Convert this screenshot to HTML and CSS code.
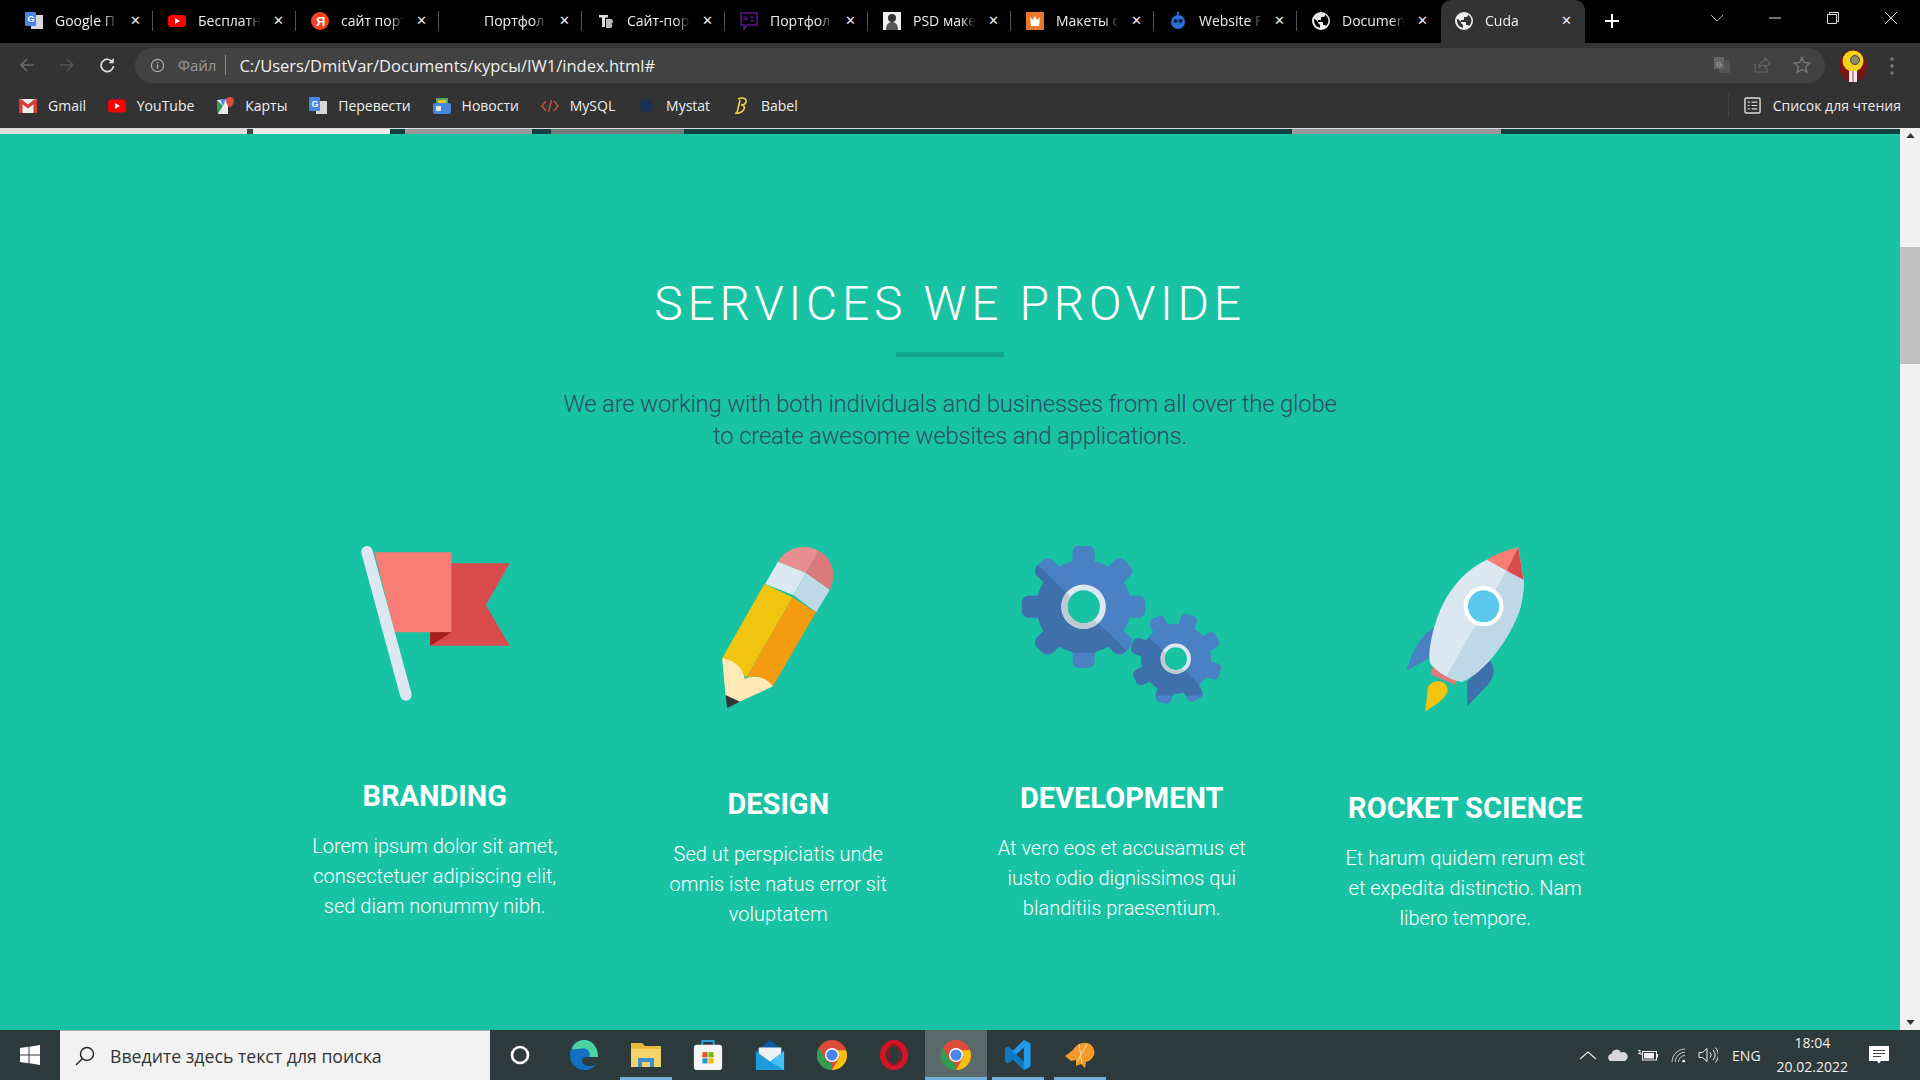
FILE: index.html
```html
<!DOCTYPE html>
<html lang="en">
  <head>
    <meta charset="UTF-8" />
    <meta name="viewport" content="width=device-width, initial-scale=1.0" />
    <title>Cuda</title>
    <link rel="stylesheet" href="styles.css">
  </head>
  <body>
    <div class="tabstrip">
      <div class="tab"><svg class="fav" viewBox="0 0 18 18"><rect x="6" y="3" width="12" height="14" fill="#d8d8d8"/><rect y="0" width="11" height="14" rx="1" fill="#4a86e8"/><text x="2.5" y="10" class="fav-g">G</text></svg><span class="tab-title">Google П</span><span class="tab-close">✕</span></div>
      <div class="tab"><svg class="fav" viewBox="0 0 18 18"><rect y="3" width="18" height="12" rx="3.5" fill="#f00"/><path d="M7 6l5 3-5 3z" fill="#fff"/></svg><span class="tab-title">Бесплатн</span><span class="tab-close">✕</span></div>
      <div class="tab"><svg class="fav" viewBox="0 0 18 18"><circle cx="9" cy="9" r="9" fill="#fc3f1d"/><text x="5" y="14" class="fav-ya">Я</text></svg><span class="tab-title">сайт порт</span><span class="tab-close">✕</span></div>
      <div class="tab"><span class="fav"></span><span class="tab-title">Портфол</span><span class="tab-close">✕</span></div>
      <div class="tab"><svg class="fav" viewBox="0 0 18 18"><path d="M2 3h9v2.500H8V15H5V5.500H2z" fill="#ddd"/><path d="M9 7h4.500a2.500 2.500 0 0 1 1 4.800A2.500 2.500 0 0 1 13.500 16H9z" fill="#bbb"/></svg><span class="tab-title">Сайт-пор</span><span class="tab-close">✕</span></div>
      <div class="tab"><svg class="fav" viewBox="0 0 18 18"><path d="M1 1h16v12H7l-3 4v-4H1z" fill="none" stroke="#5b1a8c" stroke-width="1.500"/><path d="M4 9V5h3v4M4 7h3M10 5h4M12 5v4M10 9h4" fill="none" stroke="#5b1a8c"/></svg><span class="tab-title">Портфол</span><span class="tab-close">✕</span></div>
      <div class="tab"><svg class="fav" viewBox="0 0 18 18"><rect width="18" height="18" fill="#eee"/><circle cx="9" cy="6" r="4" fill="#333"/><path d="M3 18c0-6 3-8 6-8s6 2 6 8z" fill="#555"/></svg><span class="tab-title">PSD маке</span><span class="tab-close">✕</span></div>
      <div class="tab"><svg class="fav" viewBox="0 0 18 18"><rect width="18" height="18" fill="#e8792b"/><path d="M4 5l2.500 3L9 4l2.500 4L14 5l-1 9H5z" fill="#fff"/></svg><span class="tab-title">Макеты с</span><span class="tab-close">✕</span></div>
      <div class="tab"><svg class="fav" viewBox="0 0 18 18"><circle cx="9" cy="10" r="7" fill="#2a6fd6"/><circle cx="6.500" cy="9" r="2" fill="#0b1f44"/><circle cx="11.500" cy="9" r="2" fill="#0b1f44"/><path d="M9 3V0" stroke="#2a6fd6" stroke-width="2"/></svg><span class="tab-title">Website F</span><span class="tab-close">✕</span></div>
      <div class="tab tab-last"><svg class="fav" viewBox="0 0 18 18"><use href="#globe"/></svg><span class="tab-title">Documen</span><span class="tab-close">✕</span></div>
      <div class="tab tab-active"><svg class="fav" viewBox="0 0 18 18"><use href="#globe"/></svg><span class="tab-title">Cuda</span><span class="tab-close">✕</span></div>
      <svg class="new-tab" viewBox="0 0 16 16"><path d="M8 1v14M1 8h14" stroke="#fff" stroke-width="2"/></svg>
      <div class="win-controls">
        <svg viewBox="0 0 14 14"><path d="M1 4l6 6 6-6" fill="none" stroke="#aaa"/></svg>
        <svg viewBox="0 0 14 14"><path d="M1 7h12" stroke="#ddd"/></svg>
        <svg viewBox="0 0 14 14"><path d="M1.500 3.500h9v9h-9zM3.500 3.500v-2h9v9h-2" fill="none" stroke="#ddd"/></svg>
        <svg viewBox="0 0 14 14"><path d="M1 1l12 12M13 1L1 13" stroke="#ddd"/></svg>
      </div>
    </div>

    <div class="toolbar">
      <div class="nav-btns">
        <svg viewBox="0 0 16 16"><path d="M15 8H2M8 2L2 8l6 6" fill="none" stroke="#6b6b6b" stroke-width="1.700"/></svg>
        <svg viewBox="0 0 16 16"><path d="M1 8h13M8 2l6 6-6 6" fill="none" stroke="#555" stroke-width="1.700"/></svg>
        <svg viewBox="0 0 16 16"><path d="M13.500 5A6.200 6.200 0 1 0 14.500 9" fill="none" stroke="#ddd" stroke-width="1.700"/><path d="M14.800 1v5.200H9.600z" fill="#ddd"/></svg>
      </div>
      <div class="omnibox">
        <svg class="info" viewBox="0 0 16 16"><circle cx="8" cy="8" r="6.500" fill="none" stroke="#aaa" stroke-width="1.300"/><path d="M8 7v4.500M8 4.200v1.500" stroke="#aaa" stroke-width="1.500"/></svg>
        <span class="scheme">Файл</span>
        <span class="url">C:/Users/DmitVar/Documents/курсы/IW1/index.html#</span>
        <div class="omni-icons">
          <svg viewBox="0 0 18 18"><rect x="6" y="4" width="11" height="13" fill="#555"/><rect x="1" y="1" width="10" height="12" fill="#666"/><text x="3" y="10.500" class="fav-gt">G</text></svg>
          <svg viewBox="0 0 18 18"><path d="M2 8v8h12v-4M6 12c0-5 3-7 6-7V2l5 5-5 5V9c-3 0-5 1-6 3z" fill="none" stroke="#666" stroke-width="1.200"/></svg>
          <svg viewBox="0 0 18 18"><path d="M9 1.500l2.300 5 5.400.6-4 3.700 1.100 5.400L9 13.500l-4.800 2.700 1.100-5.400-4-3.700 5.400-.6z" fill="none" stroke="#777" stroke-width="1.400"/></svg>
        </div>
      </div>
      <svg class="avatar" viewBox="0 0 28 32"><ellipse cx="14" cy="16" rx="14" ry="16" fill="#7a1414"/><circle cx="14" cy="11" r="10.500" fill="#f2d21b"/><path d="M4 12h20l-5 8H9z" fill="#f2d21b"/><circle cx="16" cy="10" r="4.500" fill="#8a8a6a" stroke="#444"/><path d="M10 21h8v11h-8z" fill="#eee"/><path d="M14 21v11" stroke="#a33"/></svg>
      <svg class="menu-dots" viewBox="0 0 4 18"><circle cx="2" cy="2" r="1.800" fill="#777"/><circle cx="2" cy="9" r="1.800" fill="#777"/><circle cx="2" cy="16" r="1.800" fill="#777"/></svg>
    </div>

    <div class="bookmarks">
      <a class="bm"><svg viewBox="0 0 18 14"><rect width="18" height="14" rx="1.500" fill="#eee"/><path d="M0 1.500v12.500h3.500V5.500L9 9.500l5.500-4V14H18V1.500L16 0 9 5.500 2 0z" fill="#d93c2f"/></svg>Gmail</a>
      <a class="bm"><svg viewBox="0 0 18 14"><rect width="18" height="13" y=".5" rx="3.500" fill="#f00"/><path d="M7 4l5 3-5 3z" fill="#fff"/></svg>YouTube</a>
      <a class="bm"><svg viewBox="0 0 18 18"><path d="M1 3l11-1v15H2z" fill="#eee"/><path d="M1 3l6 6-5 8z" fill="#3a9a54"/><path d="M7 9l5 8H2z" fill="#e8e8e8"/><path d="M4 2h6L7 9z" fill="#4a86e8"/><path d="M14 0a4 4 0 0 1 4 4c0 3-4 7-4 7s-4-4-4-7a4 4 0 0 1 4-4z" fill="#d94b3c"/></svg>Карты</a>
      <a class="bm"><svg viewBox="0 0 18 18"><rect x="7" y="4" width="11" height="13" fill="#d8d8d8"/><rect y="0" width="11" height="14" rx="1" fill="#4a86e8"/><text x="2.500" y="10" class="fav-g">G</text></svg>Перевести</a>
      <a class="bm"><svg viewBox="0 0 18 18"><rect x="3" y="1" width="12" height="6" fill="#5aa75a"/><rect x="5" y="3" width="8" height="4" fill="#e8c33a"/><rect x="0" y="6" width="18" height="11" rx="2" fill="#4a86d8"/><rect x="3" y="9" width="5" height="5" fill="#fff" opacity=".8"/></svg>Новости</a>
      <a class="bm"><svg viewBox="0 0 18 14"><path d="M5 2L1 7l4 5M13 2l4 5-4 5" fill="none" stroke="#c0503c" stroke-width="1.500"/><path d="M10.500 1l-3 12" stroke="#c0503c" stroke-width="1.500"/></svg>MySQL</a>
      <a class="bm"><svg viewBox="0 0 18 18"><circle cx="9" cy="9" r="7" fill="#1a3154"/></svg>Mystat</a>
      <a class="bm"><svg viewBox="0 0 18 18"><path d="M6 2c4-2 9-1 8 3-.5 2-3 3-5 3 3 0 4 2 3 4-1 3-6 5-9 4M8 3L5 16" fill="none" stroke="#f2d23c" stroke-width="1.600"/></svg>Babel</a>
      <a class="reading-list"><svg viewBox="0 0 18 18"><rect x="1" y="1" width="16" height="16" rx="1.500" fill="none" stroke="#ddd" stroke-width="1.500"/><path d="M4 5.500h2M4 9h2M4 12.500h2M8 5.500h6M8 9h6M8 12.500h6" stroke="#ddd" stroke-width="1.300"/></svg>Список для чтения</a>
    </div>

    <div class="viewport">
      <main class="page">
        <div class="hero-edge"></div>
        <section class="services">
          <h1>SERVICES WE PROVIDE</h1>
          <div class="divider"></div>
          <p class="lead">We are working with both individuals and businesses from all over the globe<br>to create awesome websites and applications.</p>
          <div class="service-grid">
            <article class="service">
              <svg class="icon icon-flag" viewBox="41 51 532 570" preserveAspectRatio="none">
                <path d="M128 70H356V310H188z" fill="#f87d74"/>
                <path d="M356 103H528L457 228 528 350H293V310H356z" fill="#d94b4b"/>
                <path d="M293 310H356L293 350z" fill="#a81e1e"/>
                <path d="M106 68L221 498" stroke="#dbe8f1" stroke-width="34" stroke-linecap="round"/>
              </svg>
              <h3>BRANDING</h3>
              <p>Lorem ipsum dolor sit amet,<br>consectetuer adipiscing elit,<br>sed diam nonummy nibh.</p>
            </article>
            <article class="service">
              <svg class="icon icon-pencil" viewBox="1059 51 532 594" preserveAspectRatio="none">
                <path d="M1325 98C1345 60 1400 40 1445 65L1408 132z" fill="#e98f8f"/>
                <path d="M1445 65C1485 85 1500 135 1478 183L1408 132z" fill="#d97a7a"/>
                <path d="M1325 98L1408 132 1370 198 1287 165z" fill="#dbe8f1"/>
                <path d="M1408 132L1478 183 1438 250 1370 198z" fill="#bfd8e6"/>
                <path d="M1285 165L1368 205 1232 445 1160 388z" fill="#f1c40f"/>
                <path d="M1368 205L1437 250 1310 472 1262 442 1232 445z" fill="#f39c12"/>
                <path d="M1160 388C1195 392 1220 415 1227 450 1255 435 1290 445 1310 472L1212 518 1170 500z" fill="#ffeab5"/>
                <path d="M1170 498L1212 518 1175 537z" fill="#333"/>
              </svg>
              <h3>DESIGN</h3>
              <p>Sed ut perspiciatis unde<br>omnis iste natus error sit<br>voluptatem</p>
            </article>
            <article class="service">
              <svg class="icon icon-gears" viewBox="4.500 51 672 576" preserveAspectRatio="none">
                <defs>
                  <g id="cog">
                    <circle r="140"/>
                    <rect x="-33" y="-184" width="66" height="368" rx="20"/>
                    <rect x="-33" y="-184" width="66" height="368" rx="20" transform="rotate(45)"/>
                    <rect x="-33" y="-184" width="66" height="368" rx="20" transform="rotate(90)"/>
                    <rect x="-33" y="-184" width="66" height="368" rx="20" transform="rotate(135)"/>
                  </g>
                  <clipPath id="big-shade"><path d="M0 0L360 372H0z"/></clipPath>
                  <clipPath id="small-shade"><path d="M300 210L590 500H300z"/></clipPath>
                  <path id="globe" d="M9 0a9 9 0 1 0 0 18A9 9 0 0 0 9 0zM2 9c0-1 .2-1.800.5-2.600L6 10v1l2 2v2.800A7 7 0 0 1 2 9zm12 5c-.3-.6-1-1-1.700-1H11v-2c0-.6-.4-1-1-1H6V8h2c.6 0 1-.4 1-1V5h2c1 0 2-.9 2-2v-.3A7 7 0 0 1 14 14z" fill="#eee"/>
                </defs>
                <use href="#cog" transform="translate(233 233) scale(.94 1)" fill="#4a80c4"/>
                <g clip-path="url(#big-shade)"><use href="#cog" transform="translate(233 233) scale(.94 1)" fill="#3e70ac"/></g>
                <ellipse cx="233" cy="233" rx="54" ry="58" fill="#18c3a4" stroke="#dbe8f1" stroke-width="17"/>
                <g clip-path="url(#big-shade)"><ellipse cx="233" cy="233" rx="54" ry="58" fill="none" stroke="#bfcbd1" stroke-width="17"/></g>
                <use href="#cog" transform="translate(492 389) scale(.7 .75) rotate(18)" fill="#4a80c4"/>
                <g clip-path="url(#small-shade)"><use href="#cog" transform="translate(492 389) scale(.7 .75) rotate(18)" fill="#3e70ac"/></g>
                <ellipse cx="491" cy="389" rx="37" ry="40" fill="#18c3a4" stroke="#dbe8f1" stroke-width="11"/>
                <g clip-path="url(#small-shade)"><ellipse cx="491" cy="389" rx="37" ry="40" fill="none" stroke="#bfcbd1" stroke-width="11"/></g>
              </svg>
              <h3>DEVELOPMENT</h3>
              <p>At vero eos et accusamus et<br>iusto odio dignissimos qui<br>blanditiis praesentium.</p>
            </article>
            <article class="service">
              <svg class="icon icon-rocket" viewBox="968 51 672 606" preserveAspectRatio="none">
                <path d="M1216 296C1185 310 1155 370 1140 425L1208 385z" fill="#4a80c4"/>
                <path d="M1365 390C1390 405 1390 435 1370 465L1310 532V460z" fill="#3e70ac"/>
                <path d="M1212 415L1283 450 1275 467 1208 436z" fill="#e07a7a"/>
                <path d="M1193 548L1200 475C1210 450 1250 450 1255 478 1258 505 1225 525 1193 548z" fill="#f1c40f"/>
                <path d="M1365 92C1300 125 1250 190 1225 270 1210 320 1200 370 1206 402 1225 430 1260 452 1295 458 1345 440 1420 350 1455 250 1465 215 1470 180 1468 150L1453 55z" fill="#dbe8f1"/>
                <path d="M1420 125L1468 150C1470 180 1465 215 1455 250 1420 350 1345 440 1295 458 1280 456 1265 450 1252 442z" fill="#bfd8e6"/>
                <path d="M1365 92C1390 75 1425 62 1453 55L1420 125z" fill="#f87d74"/>
                <path d="M1453 55L1468 152 1420 125z" fill="#d94b4b"/>
                <ellipse cx="1356" cy="232" rx="50" ry="54" fill="#5cc8ec" stroke="#fff" stroke-width="12"/>
              </svg>
              <h3>ROCKET SCIENCE</h3>
              <p>Et harum quidem rerum est<br>et expedita distinctio. Nam<br>libero tempore.</p>
            </article>
          </div>
        </section>
      </main>
      <div class="scrollbar">
        <svg viewBox="0 0 10 6"><path d="M5 0l5 6H0z" fill="#333"/></svg>
        <div class="scroll-track"><div class="scroll-thumb"></div></div>
        <svg viewBox="0 0 10 6"><path d="M5 6l5-6H0z" fill="#333"/></svg>
      </div>
    </div>

    <footer class="taskbar">
      <div class="start"><svg viewBox="0 0 20 20"><path d="M0 3l8.500-1.200v7.700H0zM9.500 1.700L20 0v9.500H9.500zM0 10.500h8.500v7.700L0 17zM9.500 10.500H20V20L9.500 18.300z" fill="#fff"/></svg></div>
      <div class="search">
        <svg viewBox="0 0 20 20"><circle cx="12" cy="8" r="6.500" fill="none" stroke="#222" stroke-width="1.400"/><path d="M7.500 12.500L1 19" stroke="#222" stroke-width="1.500"/></svg>
        <span>Введите здесь текст для поиска</span>
      </div>
      <div class="task task-cortana"><svg viewBox="0 0 20 20"><circle cx="10" cy="10" r="8" fill="none" stroke="#fff" stroke-width="2.600"/></svg></div>
      <div class="task"><svg viewBox="0 0 30 32"><path d="M15 0C6 0 0 7 0 16c0 9 7 16 15 16 7 0 11-3 13-6-4 2-12 3-15-2-1-3 1-6 4-6h13C30 8 24 0 15 0z" fill="#1172c4"/><path d="M2 9C5 3 10 0 15 0c9 0 15 8 15 18h-9c1-5-2-10-8-9-5 0-9 2-11 0z" fill="#4cd2a0"/></svg></div>
      <div class="task task-open"><svg viewBox="0 0 30 30"><path d="M0 3h11l3 3h16v21H0z" fill="#e8b93a"/><path d="M0 9h30v18H0z" fill="#f5d36b"/><path d="M7 18h16v9h-4v-5h-8v5H7z" fill="#3b8fd1"/></svg></div>
      <div class="task"><svg viewBox="0 0 30 32"><path d="M9 6V1h12v5" fill="none" stroke="#29a0d8" stroke-width="2"/><rect y="5" width="30" height="27" rx="3" fill="#f5f5f5"/><rect x="9" y="13" width="5.500" height="5.500" fill="#e8512f"/><rect x="15.500" y="13" width="5.500" height="5.500" fill="#7ab800"/><rect x="9" y="19.500" width="5.500" height="5.500" fill="#1f9cd8"/><rect x="15.500" y="19.500" width="5.500" height="5.500" fill="#fbb900"/></svg></div>
      <div class="task"><svg viewBox="0 0 30 32"><path d="M15 0l15 12v20H0V12z" fill="#0a5ea8"/><path d="M3 8h24v12l-12 6-12-6z" fill="#f0f0f0"/><path d="M0 12l15 11 15-11v20H0z" fill="#1c9be0"/><path d="M15 23l15-11v20z" fill="#45c0f2"/></svg></div>
      <div class="task"><svg viewBox="0 0 32 32"><use href="#chrome"/></svg></div>
      <div class="task"><svg viewBox="0 0 30 32"><ellipse cx="15" cy="16" rx="12" ry="13" fill="none" stroke="#d41525" stroke-width="6"/><ellipse cx="15" cy="16" rx="6" ry="11" fill="none" stroke="#a50f1e" stroke-width="1.500"/></svg></div>
      <div class="task task-active"><svg viewBox="0 0 32 32"><defs><g id="chrome"><circle cx="16" cy="16" r="16" fill="#dd4b39"/><path d="M16 32a16 16 0 0 1-14-24l9 16h5z" fill="#2f9e4f"/><path d="M16 32l8-14-3-7h10c4 10-4 21-15 21z" fill="#f4c20d"/><circle cx="16" cy="16" r="7.500" fill="#fff"/><circle cx="16" cy="16" r="6" fill="#4a86e8"/></g></defs><use href="#chrome"/></svg></div>
      <div class="task task-open"><svg viewBox="0 0 30 36"><path d="M22 0l8 4v28l-8 4-13-13-6 5-3-2v-16l3-2 6 5z" fill="#1f9cf0"/><path d="M22 9L12 18l10 9z" fill="#2e3b3d"/><path d="M0 10l3-2 19 18v10L9 23l-6 5-3-2z" fill="#0f78c4"/></svg></div>
      <div class="task task-open"><svg viewBox="0 0 30 30"><path d="M0 16l8-6C12 3 22 0 27 6c5 6 2 14-6 16l-1 6-4-4-5 2 0-6-5 1z" fill="#f39a2b"/><path d="M14 4l3 20M22 4L12 22" stroke="#ffd9a8" fill="none"/></svg></div>
      <div class="tray">
        <svg class="tray-chevron" viewBox="0 0 16 9"><path d="M0 8l8-7 8 7" fill="none" stroke="#eee" stroke-width="1.200"/></svg>
        <svg class="tray-cloud" viewBox="0 0 20 12"><path d="M4 12a3.500 3.500 0 0 1-.5-7A5 5 0 0 1 13 3.500 4 4 0 0 1 17 12z" fill="#d8d8d8"/></svg>
        <svg class="tray-battery" viewBox="0 0 20 12"><path d="M0 1.500h2M0 4.500h2M2 1v4h2" stroke="#eee" fill="none"/><rect x="4.500" y="2.500" width="14" height="8.500" fill="none" stroke="#eee"/><rect x="6" y="4" width="10" height="5.500" fill="#eee"/><rect x="19" y="5" width="1" height="3.500" fill="#eee"/></svg>
        <svg class="tray-wifi" viewBox="0 0 16 16"><path d="M1 15A14 14 0 0 1 15 1M4.500 15A10.500 10.500 0 0 1 15 4.500M8 15a7 7 0 0 1 7-7" fill="none" stroke="#ccc"/><circle cx="13.500" cy="14" r="1.500" fill="#eee"/></svg>
        <svg class="tray-volume" viewBox="0 0 20 16"><path d="M1 5.500h3.500L9 1.500v13l-4.500-4H1zM12 5.500a3.500 3.500 0 0 1 0 5M15 3a7 7 0 0 1 0 10M17.500 .5a11 11 0 0 1 0 15" fill="none" stroke="#eee"/></svg>
        <span class="lang">ENG</span>
        <div class="clock"><span>18:04</span><span>20.02.2022</span></div>
        <svg class="tray-notify" viewBox="0 0 20 20"><path d="M0 1h20v15h-8l-2 2.500L8 16H0z" fill="#fff"/><path d="M4 5.500h12M4 8.500h12M4 11.500h8" stroke="#444"/></svg>
      </div>
    </footer>
  </body>
</html>
```

FILE: styles.css
```css
* {
  box-sizing: border-box;
}
html, body {
  height: 100%;
}
body {
  margin: 0;
  display: flex;
  flex-direction: column;
  overflow: hidden;
  font-family: "Open Sans", "Noto Sans", sans-serif;
  color: #eee;
  background: #18c3a4;
}
svg {
  display: block;
  flex: none;
}

/* browser tabs */
.tabstrip {
  height: 43px;
  background: #000;
  display: flex;
  align-items: flex-end;
  padding-left: 11px;
  flex: none;
}
.tab {
  width: 143px;
  height: 43px;
  padding: 0 12px 2px 14px;
  display: flex;
  align-items: center;
  gap: 12px;
  font-size: 14px;
  position: relative;
  border-right: 1px solid transparent;
}
.tab::after {
  content: "";
  position: absolute;
  right: 0;
  top: 11px;
  height: 20px;
  width: 1px;
  background: #555;
}
.tab-last::after,
.tab-active::after {
  display: none;
}
.tab-active {
  background: #333;
  border-radius: 10px 10px 0 0;
  width: 144px;
}
.fav {
  width: 18px;
  height: 18px;
  flex: none;
}
.fav-g {
  font: bold 9px "Liberation Sans", sans-serif;
  fill: #fff;
}
.fav-gt {
  font: bold 8px "Liberation Sans", sans-serif;
  fill: #999;
}
.fav-ya {
  font: bold 13px "Liberation Sans", sans-serif;
  fill: #fff;
}
.tab-title {
  flex: 1;
  min-width: 0;
  white-space: nowrap;
  -webkit-mask-image: linear-gradient(90deg, #000 78%, transparent 100%);
  mask-image: linear-gradient(90deg, #000 78%, transparent 100%);
}
.tab-close {
  font: bold 13px "DejaVu Sans", sans-serif;
  color: #eee;
  flex: none;
}
.new-tab {
  width: 16px;
  height: 16px;
  margin: 0 0 14px 19px;
}
.win-controls {
  margin-left: auto;
  display: flex;
  align-self: flex-start;
  padding: 11px 22px 0 0;
  gap: 44px;
}
.win-controls svg {
  width: 14px;
  height: 14px;
}

/* address bar */
.toolbar {
  height: 40px;
  background: #333;
  display: flex;
  align-items: flex-end;
  padding: 0 20px 0 19px;
  flex: none;
}
.nav-btns {
  display: flex;
  gap: 24px;
  align-self: center;
  margin-top: 4px;
  width: 116px;
}
.nav-btns svg {
  width: 16px;
  height: 16px;
}
.omnibox {
  width: 1690px;
  height: 35px;
  border-radius: 18px;
  background: #424242;
  display: flex;
  align-items: center;
  padding: 0 14px 1px 15px;
}
.info {
  width: 15px;
  height: 15px;
  margin-right: 13px;
}
.scheme {
  color: #9a9a9a;
  font-size: 15px;
  padding-right: 9px;
  border-right: 1px solid #888;
  line-height: 20px;
  margin-right: 13px;
}
.url {
  color: #f0f0f0;
  font-size: 16.500px;
}
.omni-icons {
  margin-left: auto;
  display: flex;
  gap: 22px;
}
.omni-icons svg {
  width: 18px;
  height: 18px;
}
.avatar {
  width: 28px;
  height: 32px;
  margin: 0 0 1px 14px;
}
.menu-dots {
  width: 4px;
  height: 18px;
  margin: 0 0 8px 23px;
}

/* bookmarks */
.bookmarks {
  height: 45px;
  background: #333;
  display: flex;
  align-items: center;
  padding: 0 19px;
  gap: 21.800px;
  font-size: 14px;
  flex: none;
}
.bm {
  display: flex;
  align-items: center;
  gap: 11px;
}
.bm svg {
  width: 18px;
  height: 18px;
}
.reading-list {
  margin-left: auto;
  display: flex;
  align-items: center;
  gap: 12px;
  height: 24px;
  padding-left: 15px;
  border-left: 1px solid #444;
}
.reading-list svg {
  width: 17px;
  height: 17px;
}

/* page */
.viewport {
  flex: 1;
  min-height: 0;
  display: flex;
}
.page {
  flex: 1;
  min-width: 0;
  overflow: hidden;
}
.hero-edge {
  height: 6px;
  border-top: 1px solid #d8dcdc;
  background: linear-gradient(90deg, #e2dcdc 0 13%, #3a4a3a 13% 13.300%, #efe9e9 13.300% 20.500%, #123f40 20.500% 21.300%, #9a9a9a 21.300% 28%, #123f40 28% 29%, #6f7a7a 29% 36%, #123f40 36% 68%, #9a9a9a 68% 79%, #123f40 79% 100%);
}
.services {
  padding-top: 142px;
  font-family: Roboto, "Open Sans", sans-serif;
  color: #fff;
  text-align: center;
}
.services h1 {
  margin: 0;
  font-size: 48px;
  font-weight: 300;
  line-height: 56px;
  letter-spacing: 4.700px;
}
.divider {
  width: 108px;
  height: 5px;
  margin: 20px auto 0;
  background: #14a68c;
}
.lead {
  margin: 31px 0 0;
  font-size: 24px;
  font-weight: 300;
  line-height: 32px;
  letter-spacing: -0.250px;
  color: #2b4d66;
}
.service-grid {
  width: 1374px;
  margin: 94px auto 0;
  display: grid;
  grid-template-columns: repeat(4, 1fr);
  align-items: start;
}
.service {
  display: flex;
  flex-direction: column;
  align-items: center;
}
.icon-flag {
  width: 180px;
  height: 190px;
}
.icon-pencil {
  width: 180px;
  height: 198px;
}
.icon-gears {
  width: 240px;
  height: 192px;
}
.icon-rocket {
  width: 240px;
  height: 202px;
}
.service h3 {
  margin: 42px 0 0;
  font-size: 29px;
  font-weight: 700;
  line-height: 36px;
}
.service p {
  margin: 17px 0 0;
  font-size: 20px;
  font-weight: 300;
  line-height: 30px;
}

.scrollbar {
  width: 20px;
  background: #f1f1f1;
  display: flex;
  flex-direction: column;
  align-items: center;
  padding: 5px 0;
}
.scrollbar svg {
  width: 9px;
  height: 5px;
  flex: none;
}
.scroll-track {
  flex: 1;
  width: 100%;
  padding-top: 109px;
}
.scroll-thumb {
  height: 117px;
  background: #c1c1c1;
}

/* windows taskbar */
.taskbar {
  height: 50px;
  background: #2e3b3d;
  display: flex;
  align-items: stretch;
  flex: none;
}
.start {
  width: 60px;
  display: flex;
  align-items: center;
  justify-content: center;
}
.start svg {
  width: 20px;
  height: 20px;
}
.search {
  width: 430px;
  background: #f2f2f2;
  color: #333;
  display: flex;
  align-items: center;
  padding-left: 15px;
  gap: 15px;
  font-size: 17.700px;
  border-top: 1px solid #9fb0b0;
}
.search svg {
  width: 20px;
  height: 20px;
}
.task {
  width: 62px;
  display: flex;
  align-items: center;
  justify-content: center;
  position: relative;
}
.task svg {
  width: 30px;
  height: 30px;
}
.task-cortana {
  width: 60px;
  margin-right: 3px;
}
.task-cortana svg {
  width: 20px;
  height: 20px;
}
.task-open::after,
.task-active::after {
  content: "";
  position: absolute;
  left: 5px;
  right: 5px;
  bottom: 0;
  height: 3px;
  background: #76aedc;
}
.task-active {
  background: #5a6a6b;
}
.task-active::after {
  left: 0;
  right: 0;
}
.tray {
  margin-left: auto;
  display: flex;
  align-items: center;
  font-size: 14px;
  color: #eee;
  padding-right: 31px;
}
.tray-chevron {
  width: 16px;
  height: 9px;
}
.tray-cloud {
  width: 20px;
  height: 12px;
  margin-left: 12px;
}
.tray-battery {
  width: 20px;
  height: 12px;
  margin-left: 10px;
}
.tray-wifi {
  width: 15px;
  height: 15px;
  margin-left: 13px;
}
.tray-volume {
  width: 20px;
  height: 16px;
  margin-left: 12px;
}
.lang {
  margin-left: 14px;
}
.clock {
  display: flex;
  flex-direction: column;
  align-items: center;
  gap: 4px;
  margin-left: 16px;
  line-height: 20px;
}
.tray-notify {
  width: 20px;
  height: 20px;
  margin-left: 21px;
}
```
